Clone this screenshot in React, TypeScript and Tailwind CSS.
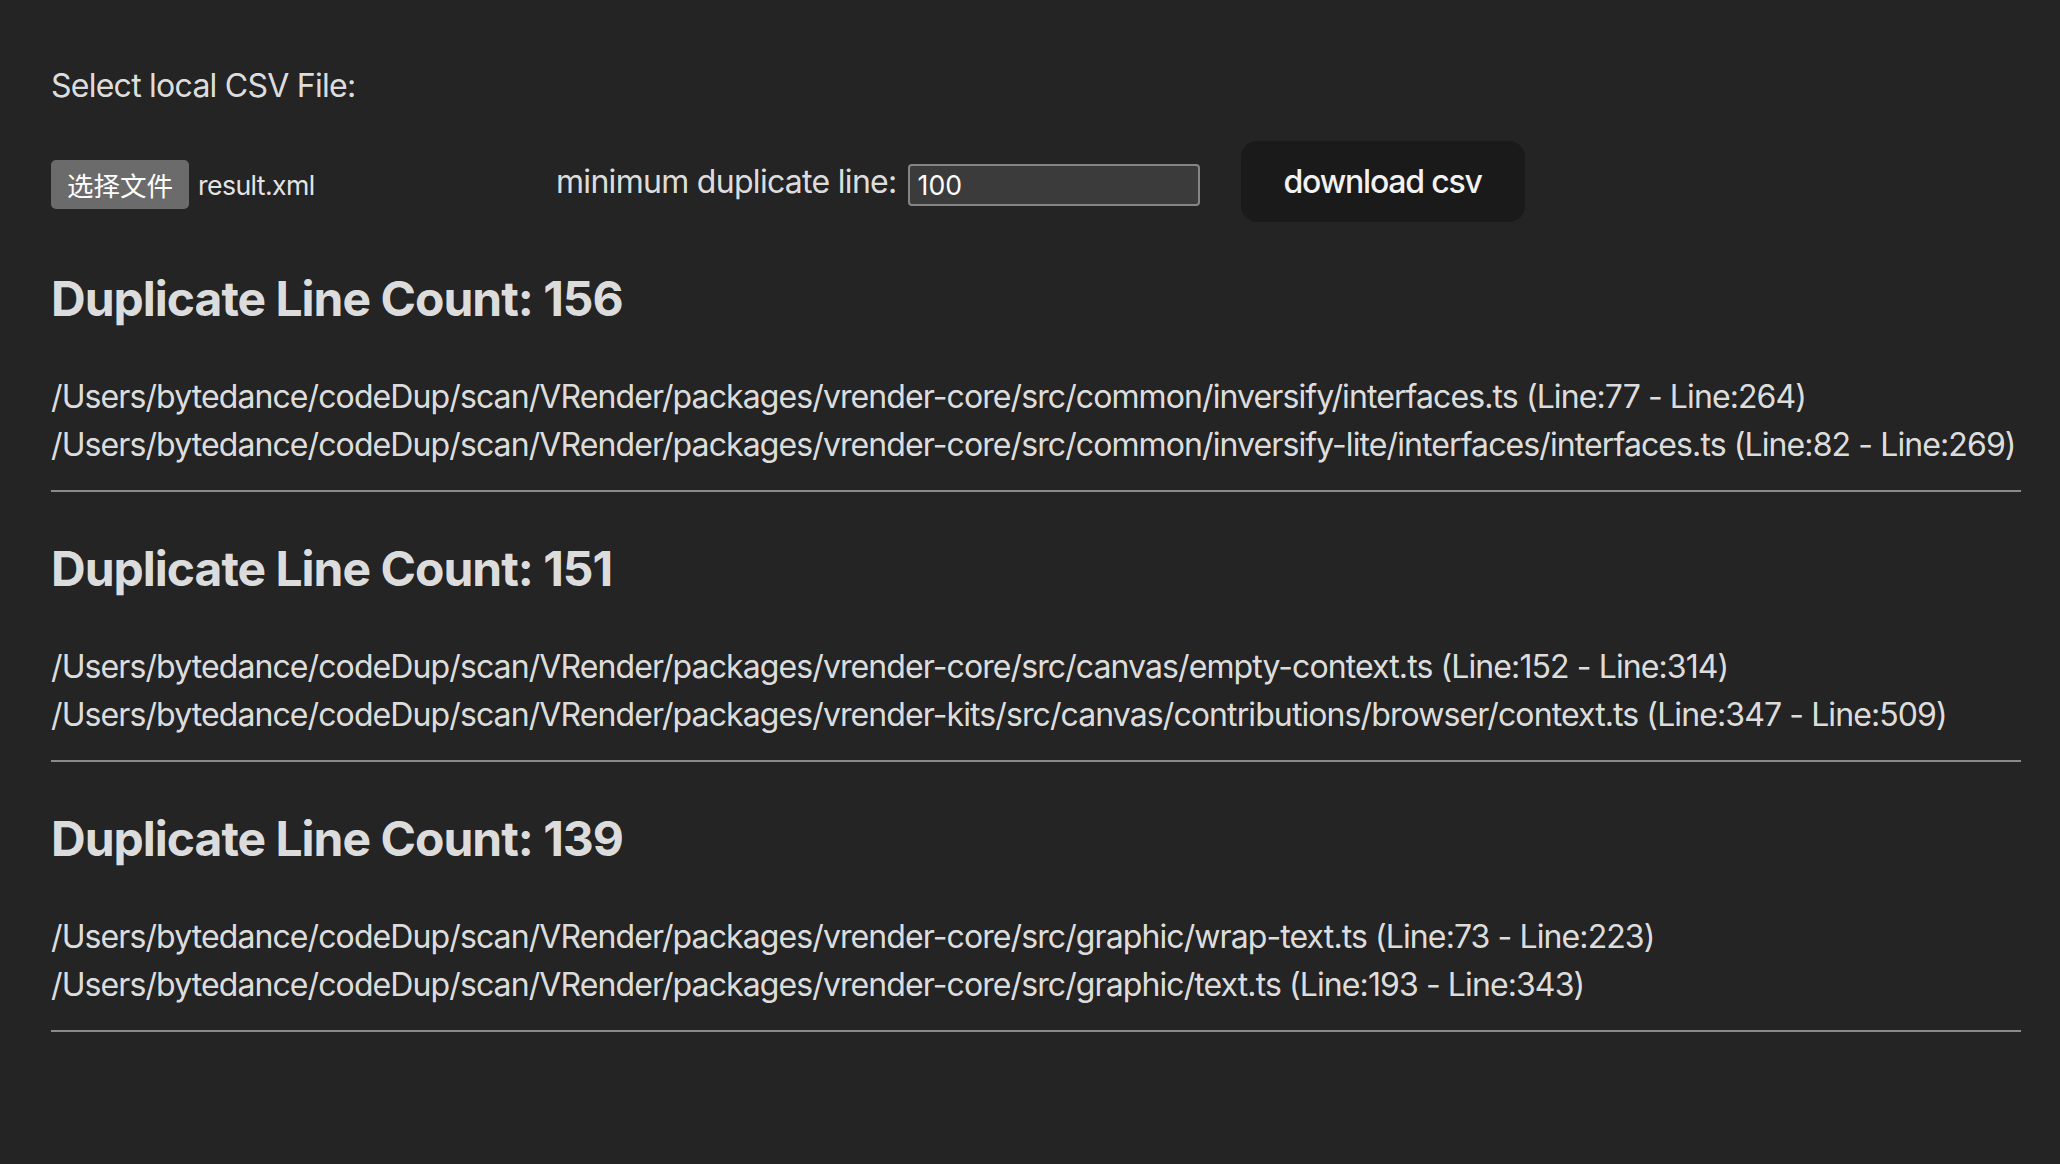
// Duplicate-line report page: CSV picker row, then one block per duplicate group.
const groups = [
  {
    count: 156,
    files: [
      "/Users/bytedance/codeDup/scan/VRender/packages/vrender-core/src/common/inversify/interfaces.ts (Line:77 - Line:264)",
      "/Users/bytedance/codeDup/scan/VRender/packages/vrender-core/src/common/inversify-lite/interfaces/interfaces.ts (Line:82 - Line:269)",
    ],
  },
  {
    count: 151,
    files: [
      "/Users/bytedance/codeDup/scan/VRender/packages/vrender-core/src/canvas/empty-context.ts (Line:152 - Line:314)",
      "/Users/bytedance/codeDup/scan/VRender/packages/vrender-kits/src/canvas/contributions/browser/context.ts (Line:347 - Line:509)",
    ],
  },
  {
    count: 139,
    files: [
      "/Users/bytedance/codeDup/scan/VRender/packages/vrender-core/src/graphic/wrap-text.ts (Line:73 - Line:223)",
      "/Users/bytedance/codeDup/scan/VRender/packages/vrender-core/src/graphic/text.ts (Line:193 - Line:343)",
    ],
  },
];

export default function App() {
  return (
    <div className="min-h-screen bg-[#242424] text-[rgba(255,255,255,0.87)] font-['Inter','Noto_Sans_CJK_SC',sans-serif] pl-[51px] pr-[39px] pt-[62px] pb-[40px]">
      <p className={`${body} tracking-[-0.75px]`}>Select local CSV File:</p>

      {/* file picker, min line input, download */}
      <div className="mt-[31px] flex items-center h-[81px]">
        <div className="w-[505px] flex items-center mt-[6px]">
          <span className="h-[49px] px-[16px] flex items-center rounded-[5px] bg-[#6b6b6b] text-white text-[26.5px] font-['Noto_Sans_CJK_SC',sans-serif]">
            选择文件
          </span>
          <span className="ml-[9px] text-[26.67px] tracking-[-0.6px] text-[#e3e3e3]">result.xml</span>
        </div>
        <label className={`${body} tracking-[-0.7px]`}>minimum duplicate line:</label>
        <input
          className="ml-[11px] mt-[7px] w-[292px] h-[42px] pl-[8px] rounded-[4px] bg-[#3b3b3b] border-2 border-[#858585] text-white text-[26.67px] outline-none"
          defaultValue="100"
        />
        <button className="ml-[41px] h-[81px] w-[284px] rounded-[16px] bg-[#1a1a1a] text-[32px] leading-[48px] font-medium tracking-[-1.2px] text-[#f2f2f2]">
          download csv
        </button>
      </div>

      {groups.map((g) => (
        <section key={g.count}>
          <h2 className="mt-[41px] text-[48px] leading-[72px] font-bold tracking-[-1px]">
            Duplicate Line Count: {g.count}
          </h2>
          <div className="mt-[38px]">
            {g.files.map((f) => (
              <p key={f} className={`${body} tracking-[-0.9px] whitespace-nowrap`}>{f}</p>
            ))}
          </div>
          <hr className="mt-[21px] border-0 border-t-2 border-[#8a8a8a]" />
        </section>
      ))}
    </div>
  );
}

const body = "text-[32px] leading-[48px]";
